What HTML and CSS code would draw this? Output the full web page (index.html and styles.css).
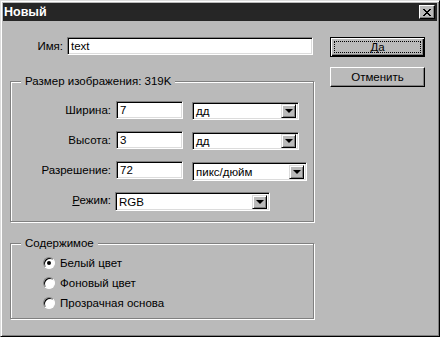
FILE: index.html
```html
<!DOCTYPE html>
<html lang="ru">
<head>
    <meta charset="UTF-8">
    <title>Новый</title>
    <link rel="stylesheet" href="styles.css">
</head>
<body>
    <div class="window">
        <div class="titlebar">
            <span class="title">Новый</span>
            <span class="close">
                <svg width="8" height="7" viewBox="0 0 8 7">
                    <path d="M0 0 L7 7 M1 0 L8 7 M7 0 L0 7 M8 0 L1 7" stroke="#000" stroke-width="1" fill="none"/>
                </svg>
            </span>
        </div>

        <div class="content">
            <div class="main">
                <div class="name-row">
                    <span class="name-label">Имя:</span>
                    <div class="field name-field">text</div>
                </div>

                <fieldset class="group size-group">
                    <legend>Размер изображения: 319K</legend>
                    <div class="row">
                        <span class="row-label">Ширина:</span>
                        <div class="field num-field">7</div>
                        <div class="select unit-select"><span class="select-text">дд</span><span class="arrow"></span></div>
                    </div>
                    <div class="row">
                        <span class="row-label">Высота:</span>
                        <div class="field num-field">3</div>
                        <div class="select unit-select"><span class="select-text">дд</span><span class="arrow"></span></div>
                    </div>
                    <div class="row">
                        <span class="row-label">Разрешение:</span>
                        <div class="field num-field">72</div>
                        <div class="select res-select"><span class="select-text">пикс/дюйм</span><span class="arrow"></span></div>
                    </div>
                    <div class="row">
                        <span class="row-label"><u>Р</u>ежим:</span>
                        <div class="select mode-select"><span class="select-text">RGB</span><span class="arrow"></span></div>
                    </div>
                </fieldset>

                <fieldset class="group contents-group">
                    <legend>Содержимое</legend>
                    <div class="radio-row"><span class="radio checked"></span>Белый цвет</div>
                    <div class="radio-row"><span class="radio"></span>Фоновый цвет</div>
                    <div class="radio-row"><span class="radio"></span>Прозрачная основа</div>
                </fieldset>
            </div>

            <div class="buttons">
                <div class="button default"><span class="focus">Да</span></div>
                <div class="button">Отменить</div>
            </div>
        </div>
    </div>
</body>
</html>
```

FILE: styles.css
```css
body {
    margin: 0;
    padding: 0;
    background-color: #bababa;
}

.window {
    width: 440px;
    height: 337px;
    box-sizing: border-box;
    background-color: #bababa;
    border: 1px solid;
    border-color: #dcdcdc #000 #000 #dcdcdc;
    box-shadow: inset 1px 1px 0 #fff, inset -1px -1px 0 #808080;
    padding: 2px;
    font-family: "Liberation Sans", Arial, sans-serif;
    font-size: 11.5px;
    color: #000;
}

.titlebar {
    height: 18px;
    background-color: #262626;
    display: flex;
    align-items: center;
    justify-content: space-between;
    padding: 0 2px 0 1px;
}

.title {
    color: #fff;
    font-weight: bold;
    font-size: 12.5px;
}

.close {
    width: 16px;
    height: 14px;
    box-sizing: border-box;
    background-color: #bababa;
    border: 1px solid;
    border-color: #fff #000 #000 #fff;
    box-shadow: inset -1px -1px 0 #808080;
    display: flex;
    align-items: center;
    justify-content: center;
}

.content {
    display: flex;
    gap: 16px;
    padding: 16px 0 0 7px;
}

.main {
    width: 304px;
}

/* sunken white field */
.field, .select {
    box-sizing: border-box;
    height: 18px;
    background-color: #fff;
    border: 1px solid;
    border-color: #808080 #fff #fff #808080;
    box-shadow: inset 1px 1px 0 #000, inset -1px -1px 0 #dcdcdc;
    padding: 0 3px;
    display: flex;
    align-items: center;
}

.name-row {
    display: flex;
    align-items: center;
}

.name-label {
    width: 53px;
    text-align: right;
    margin-right: 4px;
}

.name-field {
    width: 246px;
}

.group {
    margin: 0;
    padding: 0;
    min-width: 0;
    border: 1px solid #808080;
    box-shadow: 1px 1px 0 #fff, inset 1px 1px 0 #fff;
}

.group legend {
    margin-left: 10px;
    padding: 0 4px;
    line-height: 14px;
    background-color: #bababa;
}

.size-group {
    margin-top: 19px;
    height: 148px;
    box-sizing: border-box;
    padding-top: 13px;
}

.row {
    display: flex;
    align-items: flex-start;
    height: 19px;
    margin-bottom: 11px;
}

.row-label {
    width: 100px;
    text-align: right;
    margin-right: 5px;
    line-height: 18px;
}

.num-field {
    width: 67px;
    margin-right: 9px;
}

.select {
    margin-top: 1px;
    justify-content: space-between;
    padding-right: 2px;
}

.unit-select {
    width: 107px;
}

.res-select {
    width: 115px;
    height: 19px;
}

.mode-select {
    width: 155px;
    margin-left: -1px;
    height: 19px;
}

.arrow {
    width: 15px;
    height: 14px;
    box-sizing: border-box;
    background-color: #bababa;
    border: 1px solid;
    border-color: #dcdcdc #000 #000 #dcdcdc;
    box-shadow: inset 1px 1px 0 #fff, inset -1px -1px 0 #808080;
    display: flex;
    align-items: center;
    justify-content: center;
}

.arrow::after {
    content: "";
    border-left: 4px solid transparent;
    border-right: 4px solid transparent;
    border-top: 4px solid #000;
}

.contents-group {
    margin-top: 14px;
    height: 83px;
    box-sizing: border-box;
    padding-top: 3px;
}

.radio-row {
    display: flex;
    align-items: center;
    height: 20px;
    padding-left: 32px;
}

.radio {
    width: 12px;
    height: 12px;
    box-sizing: border-box;
    border-radius: 50%;
    border: 1px solid;
    border-color: #808080 #fff #fff #808080;
    box-shadow: inset 1px 1px 0 #000;
    background-color: #fff;
    margin-right: 5px;
    display: flex;
    align-items: center;
    justify-content: center;
}

.radio.checked::after {
    content: "";
    width: 4px;
    height: 4px;
    border-radius: 50%;
    background-color: #000;
}

.buttons {
    width: 95px;
    display: flex;
    flex-direction: column;
    gap: 10px;
}

.button {
    box-sizing: border-box;
    height: 20px;
    border: 1px solid;
    border-color: #fff #000 #000 #fff;
    box-shadow: inset -1px -1px 0 #808080;
    display: flex;
    align-items: center;
    justify-content: center;
}

.button.default {
    border: 1px solid #000;
    box-shadow: inset 1px 1px 0 #fff, inset -1px -1px 0 #000, inset -2px -2px 0 #808080;
    padding: 3px;
}

.focus {
    flex: 1;
    align-self: stretch;
    border: 1px dotted #000;
    display: flex;
    align-items: center;
    justify-content: center;
}
```
